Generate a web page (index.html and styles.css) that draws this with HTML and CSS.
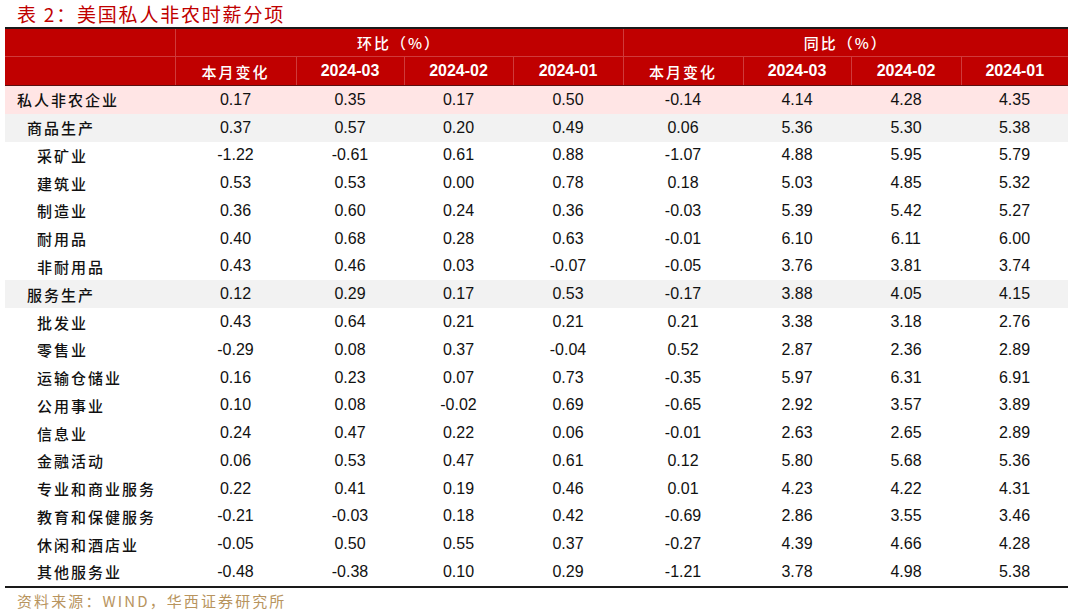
FILE: index.html
```html
<!DOCTYPE html>
<html lang="zh-CN">
<head>
<meta charset="utf-8">
<title>表 2：美国私人非农时薪分项</title>
<link rel="stylesheet" href="styles.css">
</head>
<body>
<div class="page">
  <h1 class="title">表 2：美国私人非农时薪分项</h1>
  <table class="data">
    <colgroup>
      <col class="c-label"><col class="c-a"><col class="c-b"><col class="c-c"><col class="c-d"><col class="c-e"><col class="c-f"><col class="c-g"><col class="c-h">
    </colgroup>
    <thead>
      <tr class="h1">
        <th class="blank"></th>
        <th colspan="4" class="grp zh">环比（%）</th>
        <th colspan="4" class="grp zh">同比（%）</th>
      </tr>
      <tr class="h2">
        <th class="blank"></th>
        <th class="zh">本月变化</th><th>2024-03</th><th>2024-02</th><th class="end">2024-01</th>
        <th class="zh">本月变化</th><th>2024-03</th><th>2024-02</th><th>2024-01</th>
      </tr>
    </thead>
    <tbody>
      <tr class="pink"><td class="lab l0">私人非农企业</td><td>0.17</td><td>0.35</td><td>0.17</td><td>0.50</td><td>-0.14</td><td>4.14</td><td>4.28</td><td>4.35</td></tr>
      <tr class="grey"><td class="lab l1">商品生产</td><td>0.37</td><td>0.57</td><td>0.20</td><td>0.49</td><td>0.06</td><td>5.36</td><td>5.30</td><td>5.38</td></tr>
      <tr><td class="lab l2">采矿业</td><td>-1.22</td><td>-0.61</td><td>0.61</td><td>0.88</td><td>-1.07</td><td>4.88</td><td>5.95</td><td>5.79</td></tr>
      <tr><td class="lab l2">建筑业</td><td>0.53</td><td>0.53</td><td>0.00</td><td>0.78</td><td>0.18</td><td>5.03</td><td>4.85</td><td>5.32</td></tr>
      <tr><td class="lab l2">制造业</td><td>0.36</td><td>0.60</td><td>0.24</td><td>0.36</td><td>-0.03</td><td>5.39</td><td>5.42</td><td>5.27</td></tr>
      <tr><td class="lab l2">耐用品</td><td>0.40</td><td>0.68</td><td>0.28</td><td>0.63</td><td>-0.01</td><td>6.10</td><td>6.11</td><td>6.00</td></tr>
      <tr><td class="lab l2">非耐用品</td><td>0.43</td><td>0.46</td><td>0.03</td><td>-0.07</td><td>-0.05</td><td>3.76</td><td>3.81</td><td>3.74</td></tr>
      <tr class="grey"><td class="lab l1">服务生产</td><td>0.12</td><td>0.29</td><td>0.17</td><td>0.53</td><td>-0.17</td><td>3.88</td><td>4.05</td><td>4.15</td></tr>
      <tr><td class="lab l2">批发业</td><td>0.43</td><td>0.64</td><td>0.21</td><td>0.21</td><td>0.21</td><td>3.38</td><td>3.18</td><td>2.76</td></tr>
      <tr><td class="lab l2">零售业</td><td>-0.29</td><td>0.08</td><td>0.37</td><td>-0.04</td><td>0.52</td><td>2.87</td><td>2.36</td><td>2.89</td></tr>
      <tr><td class="lab l2">运输仓储业</td><td>0.16</td><td>0.23</td><td>0.07</td><td>0.73</td><td>-0.35</td><td>5.97</td><td>6.31</td><td>6.91</td></tr>
      <tr><td class="lab l2">公用事业</td><td>0.10</td><td>0.08</td><td>-0.02</td><td>0.69</td><td>-0.65</td><td>2.92</td><td>3.57</td><td>3.89</td></tr>
      <tr><td class="lab l2">信息业</td><td>0.24</td><td>0.47</td><td>0.22</td><td>0.06</td><td>-0.01</td><td>2.63</td><td>2.65</td><td>2.89</td></tr>
      <tr><td class="lab l2">金融活动</td><td>0.06</td><td>0.53</td><td>0.47</td><td>0.61</td><td>0.12</td><td>5.80</td><td>5.68</td><td>5.36</td></tr>
      <tr><td class="lab l2">专业和商业服务</td><td>0.22</td><td>0.41</td><td>0.19</td><td>0.46</td><td>0.01</td><td>4.23</td><td>4.22</td><td>4.31</td></tr>
      <tr><td class="lab l2">教育和保健服务</td><td>-0.21</td><td>-0.03</td><td>0.18</td><td>0.42</td><td>-0.69</td><td>2.86</td><td>3.55</td><td>3.46</td></tr>
      <tr><td class="lab l2">休闲和酒店业</td><td>-0.05</td><td>0.50</td><td>0.55</td><td>0.37</td><td>-0.27</td><td>4.39</td><td>4.66</td><td>4.28</td></tr>
      <tr><td class="lab l2">其他服务业</td><td>-0.48</td><td>-0.38</td><td>0.10</td><td>0.29</td><td>-1.21</td><td>3.78</td><td>4.98</td><td>5.38</td></tr>
    </tbody>
  </table>
  <p class="source">资料来源：WIND，华西证券研究所</p>
</div>
</body>
</html>
```
FILE: styles.css
```css
html, body {
  margin: 0;
  padding: 0;
  background: #ffffff;
}
.page {
  width: 1075px;
  height: 615px;
  overflow: hidden;
  padding: 0 0 0 5px;
  box-sizing: border-box;
}
.title {
  margin: 0;
  padding-left: 12px;
  height: 27px;
  line-height: 27px;
  font-family: "Noto Sans CJK SC", sans-serif;
  font-weight: 400;
  font-size: 19px;
  letter-spacing: 1.8px;
  color: #c00000;
}
.data {
  border-collapse: collapse;
  table-layout: fixed;
  width: 1063px;
  border-top: 2px solid #1a1a1a;
  border-bottom: 2px solid #1a1a1a;
  font-family: "Liberation Sans", Arial, sans-serif;
  font-size: 16px;
  color: #111;
}
.c-label { width: 170px; }
.c-a { width: 121px; }
.c-b { width: 108px; }
.c-c { width: 109px; }
.c-d { width: 110px; }
.c-e { width: 120px; }
.c-f { width: 108px; }
.c-g { width: 110px; }
.c-h { width: 107px; }

.data thead th {
  background: #c00000;
  color: #fff;
  padding: 0;
  text-align: center;
  font-weight: 700;
  border-left: 1px solid #cf3a3a;
}
.data thead th.blank { border-left: none; }
.data .h1 th {
  height: 27px;
  border-bottom: 1px solid #cf3a3a;
}
.data .h2 th {
  height: 28px;
  border-bottom: 1px solid #5a1010;
}
.data th.zh {
  font-family: "Noto Sans CJK SC", sans-serif;
  font-weight: 500;
  font-size: 15px;
  letter-spacing: 2px;
}
.data tbody td {
  height: 27.78px;
  padding: 0;
  text-align: center;
  line-height: 1;
}
.data tbody td.lab {
  text-align: left;
  font-family: "Noto Sans CJK SC", sans-serif;
  font-weight: 500;
  font-size: 15px;
  letter-spacing: 2px;
  color: #111;
}
.l0 { padding-left: 12px !important; }
.l1 { padding-left: 22px !important; }
.l2 { padding-left: 32px !important; }
.pink td { background: #ffe5e5; }
.grey td { background: #f2f2f2; }

.source {
  margin: 0;
  padding-left: 12px;
  height: 26px;
  line-height: 26px;
  font-family: "Noto Sans CJK SC", sans-serif;
  font-size: 15px;
  letter-spacing: 2.1px;
  color: #b8945e;
}
```
